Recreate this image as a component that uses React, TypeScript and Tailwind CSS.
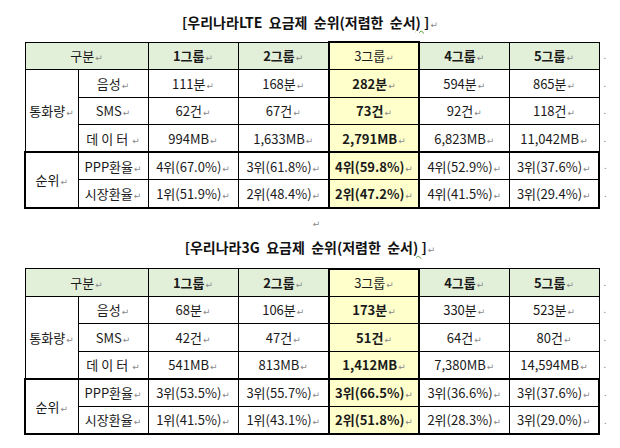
import React from "react";

const font = { fontFamily: '"Noto Sans CJK KR", "Noto Sans", "DejaVu Sans", sans-serif' };

type Table = {
    title: string;
    rows: string[][];
};

const tables: Table[] = [
    {
        title: "LTE",
        rows: [
            ["111분", "168분", "282분", "594분", "865분"],
            ["62건", "67건", "73건", "92건", "118건"],
            ["994MB", "1,633MB", "2,791MB", "6,823MB", "11,042MB"],
            ["4위(67.0%)", "3위(61.8%)", "4위(59.8%)", "4위(52.9%)", "3위(37.6%)"],
            ["1위(51.9%)", "2위(48.4%)", "2위(47.2%)", "4위(41.5%)", "3위(29.4%)"],
        ],
    },
    {
        title: "3G",
        rows: [
            ["68분", "106분", "173분", "330분", "523분"],
            ["42건", "47건", "51건", "64건", "80건"],
            ["541MB", "813MB", "1,412MB", "7,380MB", "14,594MB"],
            ["3위(53.5%)", "3위(55.7%)", "3위(66.5%)", "3위(36.6%)", "3위(37.6%)"],
            ["1위(41.5%)", "1위(43.1%)", "2위(51.8%)", "2위(28.3%)", "3위(29.0%)"],
        ],
    },
];

const subLabels = ["음성", "SMS", "데이터", "PPP환율", "시장환율"];

function Mark() {
    return (
        <span className="text-[9px] text-[#8a8a8a] ml-[1px] font-normal" style={{ fontFamily: '"DejaVu Sans", sans-serif' }}>
            ↵
        </span>
    );
}

function RowEnd() {
    return (
        <td className="text-[9px] text-[#8a8a8a] pl-[4px] align-middle border-0">.</td>
    );
}

function RateTable({ table }: { table: Table }) {
    return (
        <table className="border-collapse table-fixed ml-[24px] text-[#1a1a1a]">
            <colgroup>
                <col className="w-[53px]" />
                <col className="w-[70px]" />
                <col className="w-[90px]" />
                <col className="w-[91px]" />
                <col className="w-[90px]" />
                <col className="w-[90px]" />
                <col className="w-[90px]" />
                <col className="w-[14px]" />
            </colgroup>
            <tbody>
                {/* 헤더 */}
                <tr className="h-[27.6px] text-[13px]">
                    <td colSpan={2} className="border border-black bg-[#e2efd9] text-center p-0">
                        구분<Mark />
                    </td>
                    {["1그룹", "2그룹", "3그룹", "4그룹", "5그룹"].map((g, i) =>
                        i === 2 ? (
                            <td key={g} className="border border-black border-x-2 border-t-2 bg-[#ffffcc] text-center p-0">
                                {g}<Mark />
                            </td>
                        ) : (
                            <td key={g} className="border border-black bg-[#e2efd9] text-center font-bold p-0">
                                {g}<Mark />
                            </td>
                        )
                    )}
                    <RowEnd />
                </tr>
                {table.rows.map((row, ri) => {
                    const top = ri === 3;
                    const bottom = ri === 4;
                    const rowBorder = top ? "border-t-2" : bottom ? "border-b-2" : "";
                    return (
                        <tr key={ri} className="h-[27.6px] text-[13px]">
                            {ri === 0 && (
                                <td rowSpan={3} className="border border-black text-center p-0">
                                    통화량<Mark />
                                </td>
                            )}
                            {ri === 3 && (
                                <td rowSpan={2} className="border border-black border-l-2 border-y-2 text-center p-0">
                                    순위<Mark />
                                </td>
                            )}
                            <td className={`border border-black text-center p-0 ${rowBorder}`}>
                                <span className={ri === 2 ? "tracking-[3px]" : ""}>{subLabels[ri]}</span>
                                <Mark />
                            </td>
                            {row.map((v, ci) => {
                                let cls = "border border-black text-center p-0 " + rowBorder;
                                if (ci === 2) cls += " bg-[#ffffcc] font-bold border-x-2";
                                if (ci === 4 && ri >= 3) cls += " border-r-2";
                                return (
                                    <td key={ci} className={cls}>
                                        {v}<Mark />
                                    </td>
                                );
                            })}
                            <RowEnd />
                        </tr>
                    );
                })}
            </tbody>
        </table>
    );
}

function Title({ name }: { name: string }) {
    return (
        <div className="h-[20px] leading-[20px] text-center font-bold text-[14px] text-[#111] whitespace-pre">
            [우리나라{name}  요금제  순위(저렴한  순서
            <span className="underline decoration-wavy decoration-[#5b9b3a] decoration-1 underline-offset-2">) </span>]
            <Mark />
        </div>
    );
}

export default function App() {
    return (
        <div className="w-[620px] h-[448px] bg-white overflow-hidden" style={font}>
            <div className="pt-[12px]">
                <Title name={tables[0].title} />
            </div>
            <div className="mt-[9px]">
                <RateTable table={tables[0]} />
            </div>
            <div className="h-[22px] leading-[22px] text-center pl-[12px]">
                <Mark />
            </div>
            <div className="mt-[6px]">
                <Title name={tables[1].title} />
            </div>
            <div className="mt-[11px]">
                <RateTable table={tables[1]} />
            </div>
        </div>
    );
}
